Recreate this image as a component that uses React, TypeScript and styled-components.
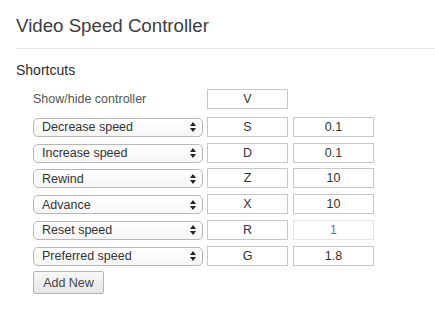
import * as React from "react";
import styled, { createGlobalStyle } from "styled-components";

const GlobalStyle = createGlobalStyle`
  html, body {
    margin: 0;
    padding: 0;
    background: #fff;
  }
  body {
    font-family: "Liberation Sans", Arial, sans-serif;
    color: #333;
  }
`;

const Page = styled.div`
  padding: 12px 0 0 16px;
`;

const Title = styled.h1`
  margin: 0;
  font-size: 18.7px;
  font-weight: normal;
  color: #3a3d42;
  line-height: 28px;
`;

const Rule = styled.hr`
  margin: 8px 0 0;
  border: 0;
  border-top: 1px solid #e6e6e6;
`;

const Section = styled.h3`
  margin: 12px 0 0;
  font-size: 14px;
  font-weight: normal;
  color: #2a2a2a;
  line-height: 18px;
`;

const List = styled.div`
  display: flex;
  flex-direction: column;
  gap: 5.75px;
  margin: 9px 0 0 17px;
`;

const Row = styled.div<{ $first?: boolean }>`
  display: flex;
  align-items: center;
  gap: 4px;
  height: ${(p) => (p.$first ? "22px" : "20px")};
  margin-bottom: ${(p) => (p.$first ? "1px" : "0")};
`;

const Label = styled.span`
  width: 170px;
  font-size: 12.5px;
  color: #555;
`;

const SelectWrap = styled.div`
  position: relative;
  width: 170px;
  height: 19px;
`;

const Select = styled.select`
  appearance: none;
  -webkit-appearance: none;
  box-sizing: border-box;
  width: 100%;
  height: 100%;
  margin: 0;
  padding: 0 18px 0 8px;
  border: 1px solid #b8b8b8;
  border-radius: 5px;
  background: linear-gradient(#ffffff, #f6f6f6);
  font-family: inherit;
  font-size: 12.5px;
  color: #333;
  outline: none;
`;

const Arrows = styled.svg`
  position: absolute;
  right: 7px;
  top: 5px;
  pointer-events: none;
`;

const Field = styled.input<{ $disabled?: boolean }>`
  box-sizing: border-box;
  width: 81px;
  height: 20px;
  margin: 0;
  padding: 0;
  border: 1px solid ${(p) => (p.$disabled ? "#e4e4e4" : "#c8c8c8")};
  background: #fff;
  text-align: center;
  font-family: inherit;
  font-size: 12.5px;
  color: ${(p) => (p.$disabled ? "#777" : "#333")};
  outline: none;
  & + & {
    margin-left: 1px;
  }
`;

const Button = styled.button`
  margin: 0;
  width: 71px;
  height: 23px;
  border: 1px solid #b4b4b4;
  border-radius: 2px;
  background: linear-gradient(#f8f8f8, #e6e6e6);
  font-family: inherit;
  font-size: 12.5px;
  color: #444;
  padding: 0;
`;

const ButtonRow = styled.div``;

type Shortcut = { action: string; key: string; value: string; disabled?: boolean };

const shortcuts: Shortcut[] = [
  { action: "Decrease speed", key: "S", value: "0.1" },
  { action: "Increase speed", key: "D", value: "0.1" },
  { action: "Rewind", key: "Z", value: "10" },
  { action: "Advance", key: "X", value: "10" },
  { action: "Reset speed", key: "R", value: "1", disabled: true },
  { action: "Preferred speed", key: "G", value: "1.8" },
];

const ArrowIcon = () => (
  <Arrows width="6" height="10" viewBox="0 0 6 10">
    <path d="M3 0 L6 4 H0 Z" fill="#222" />
    <path d="M3 10 L6 6 H0 Z" fill="#222" />
  </Arrows>
);

export default function App() {
  return (
    <Page>
      <GlobalStyle />
      <Title>Video Speed Controller</Title>
      <Rule />
      <Section>Shortcuts</Section>
      <List>
        <Row $first>
          <Label>Show/hide controller</Label>
          <Field defaultValue="V" readOnly />
        </Row>
        {shortcuts.map((s) => (
          <Row key={s.action}>
            <SelectWrap>
              <Select defaultValue={s.action}>
                {shortcuts.map((o) => (
                  <option key={o.action}>{o.action}</option>
                ))}
              </Select>
              <ArrowIcon />
            </SelectWrap>
            <Field defaultValue={s.key} readOnly />
            <Field defaultValue={s.value} $disabled={s.disabled} disabled={s.disabled} readOnly />
          </Row>
        ))}
        <ButtonRow>
          <Button>Add New</Button>
        </ButtonRow>
      </List>
    </Page>
  );
}
